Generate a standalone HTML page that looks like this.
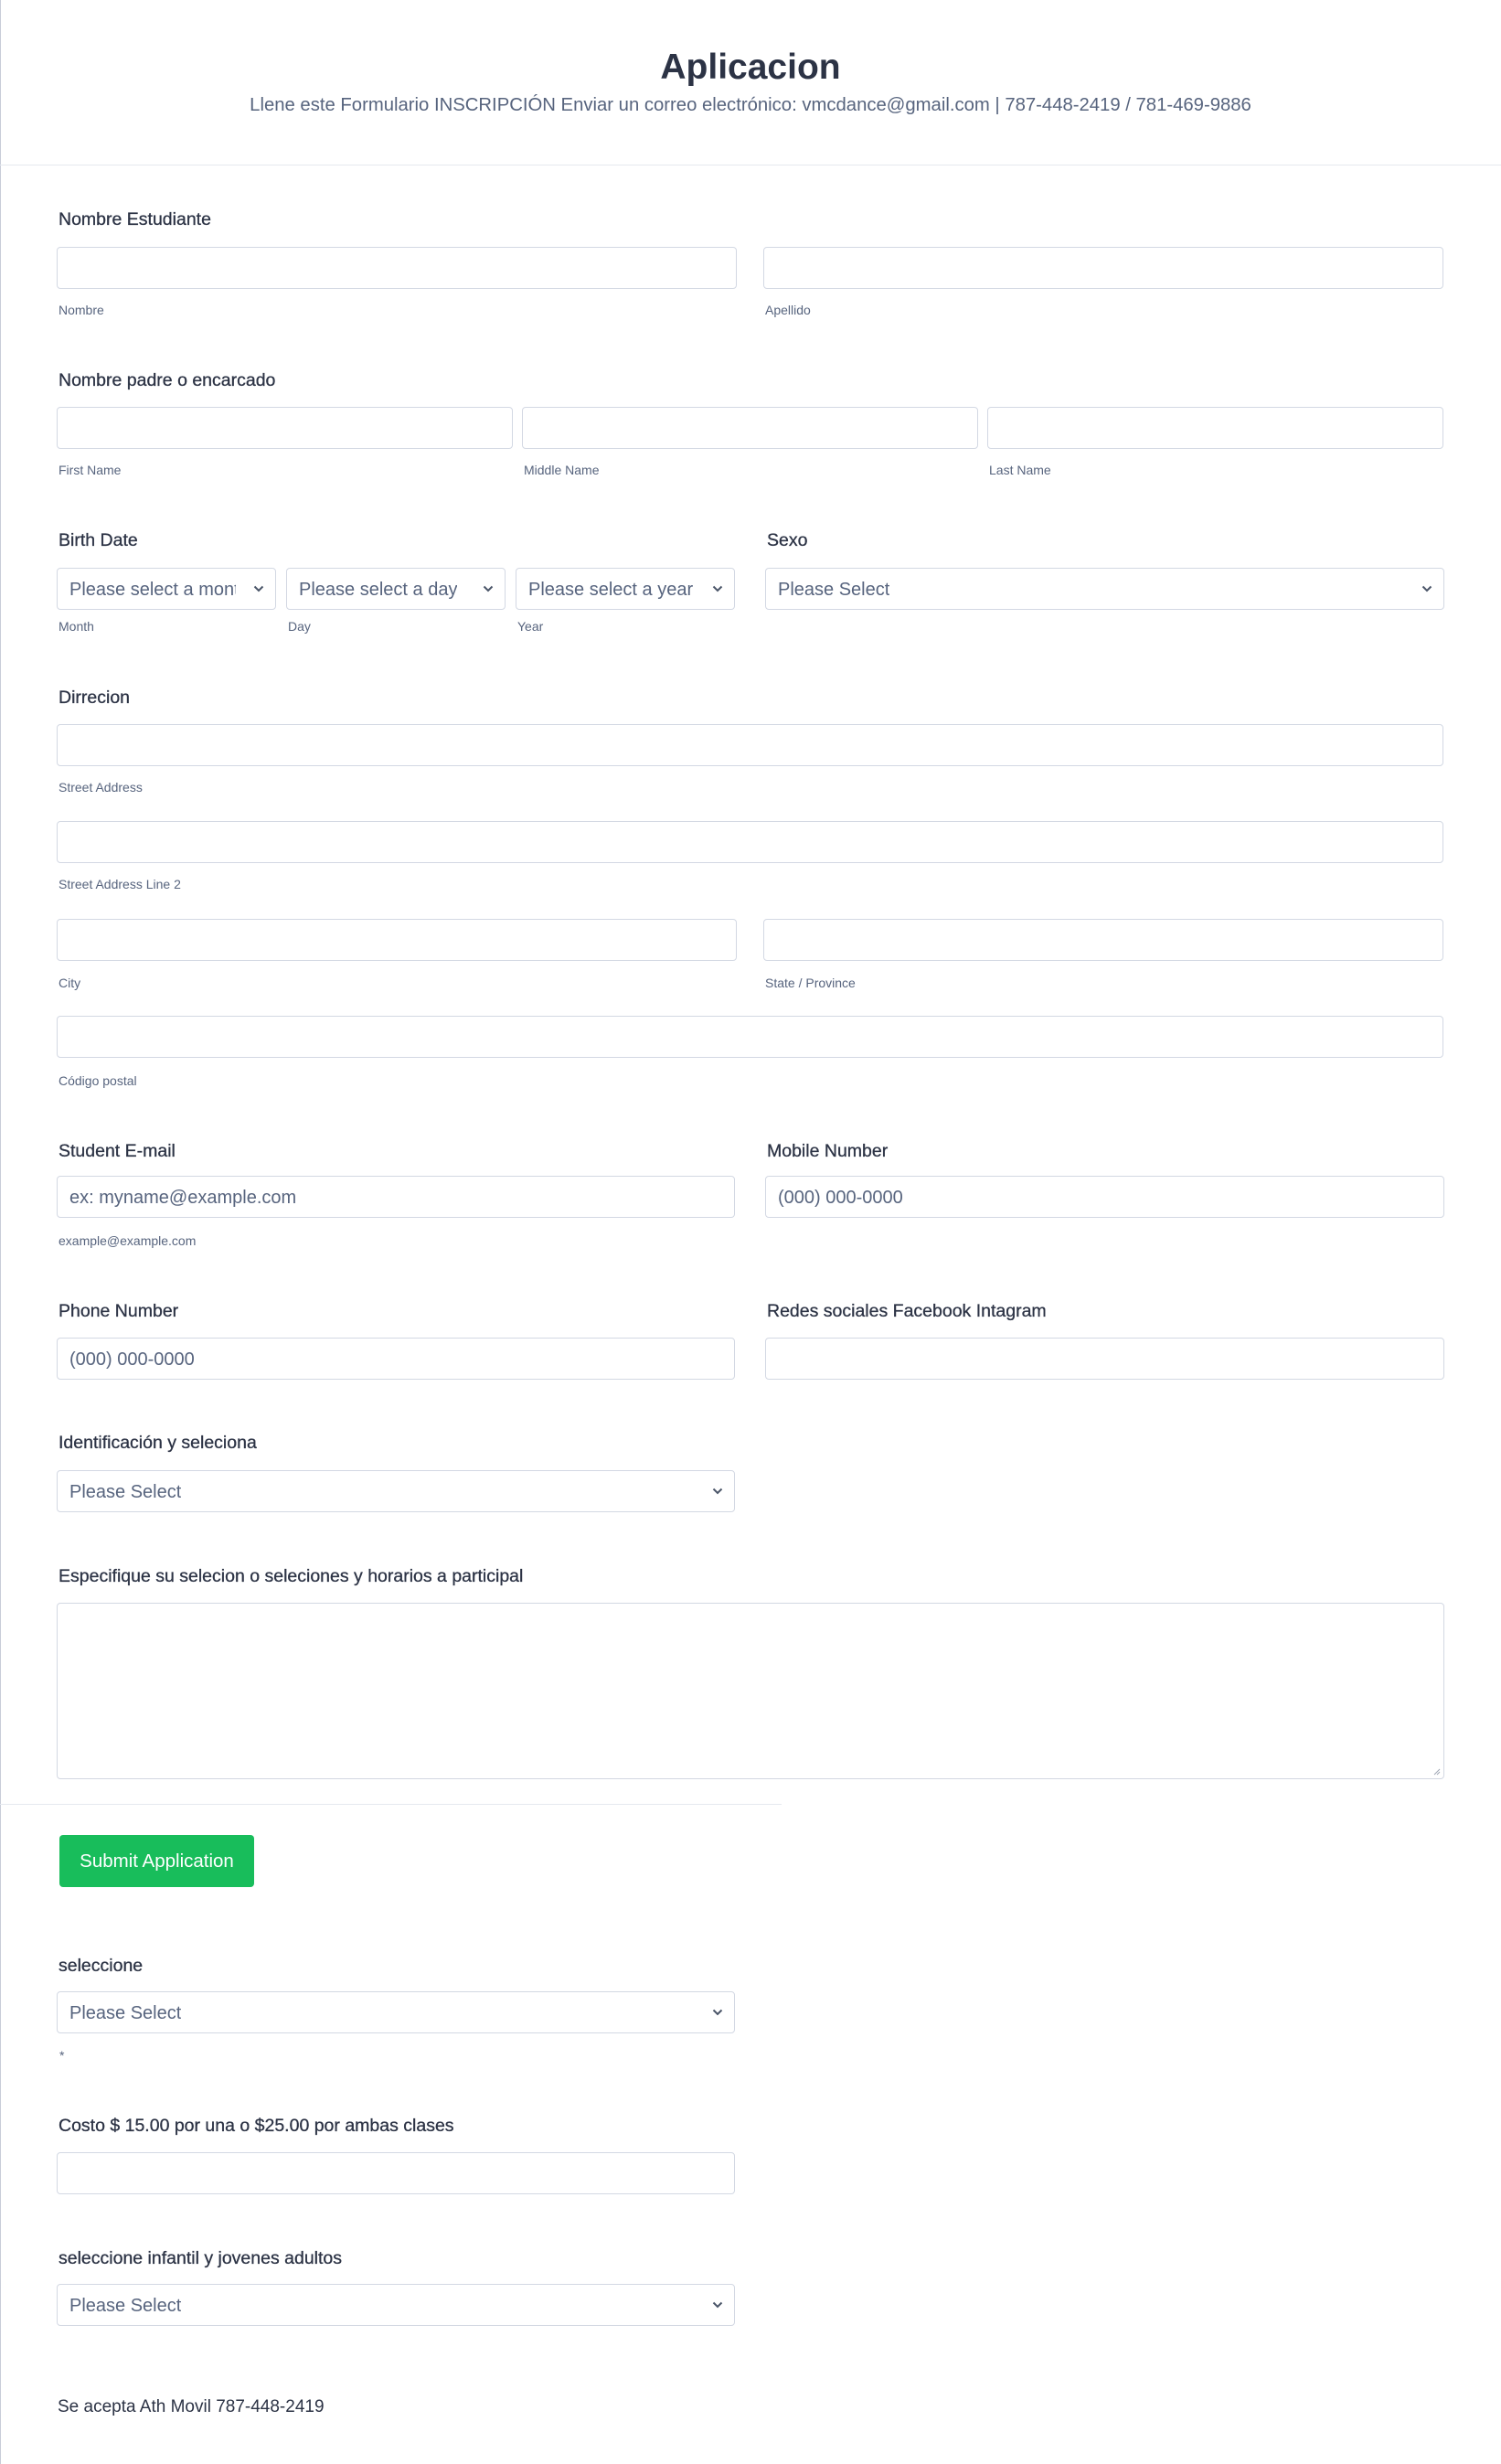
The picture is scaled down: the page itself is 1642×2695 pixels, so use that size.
<!DOCTYPE html>
<html><head><meta charset="utf-8"><style>
*{box-sizing:border-box;margin:0;padding:0}
html,body{width:1642px;height:2695px;background:#fff;overflow:hidden}
body{position:relative;font-family:"Liberation Sans",sans-serif;color:#2c3345}
.a{position:absolute;white-space:nowrap}
.lbl{position:absolute;font-size:19.5px;color:#2c3345;white-space:nowrap;line-height:22px;-webkit-text-stroke:0.3px #2c3345}
.sub{position:absolute;font-size:14px;color:#57647e;white-space:nowrap;line-height:16px}
.in{position:absolute;border:1px solid #d3d8e3;border-radius:4px;background:#fff;height:46px}
.in span{position:absolute;left:13px;top:12px;font-size:20px;color:#57647e;line-height:22px;white-space:nowrap;overflow:hidden}
.sel svg{position:absolute;right:12px;top:18px}
</style></head><body>
<div class="a" style="left:0;top:0;width:1px;height:2695px;background:#c8cdd8"></div>
<div class="a" style="left:0;top:0;width:1642px;text-align:center;top:50px;font-size:39px;font-weight:bold;color:#2c3345;line-height:48px">Aplicacion</div>
<div class="a" style="left:0;width:1642px;text-align:center;top:104px;font-size:20.3px;color:#57647e;line-height:22px">Llene este Formulario INSCRIPCIÓN Enviar un correo electrónico: vmcdance@gmail.com | 787-448-2419 / 781-469-9886</div>
<div class="a" style="left:0;top:180px;width:1642px;height:1px;background:#e6e9ef"></div>

<div class="lbl" style="left:64px;top:229px">Nombre Estudiante</div>
<div class="in" style="left:62px;top:270px;width:744px"></div>
<div class="in" style="left:835px;top:270px;width:744px"></div>
<div class="sub" style="left:64px;top:331px">Nombre</div>
<div class="sub" style="left:837px;top:331px">Apellido</div>

<div class="lbl" style="left:64px;top:405px">Nombre padre o encarcado</div>
<div class="in" style="left:62px;top:445px;width:499px"></div>
<div class="in" style="left:571px;top:445px;width:499px"></div>
<div class="in" style="left:1080px;top:445px;width:499px"></div>
<div class="sub" style="left:64px;top:506px">First Name</div>
<div class="sub" style="left:573px;top:506px">Middle Name</div>
<div class="sub" style="left:1082px;top:506px">Last Name</div>

<div class="lbl" style="left:64px;top:580px">Birth Date</div>
<div class="lbl" style="left:839px;top:580px">Sexo</div>
<div class="in sel" style="left:62px;top:621px;width:240px"><span style="width:182px">Please select a month</span><svg width="12" height="8" viewBox="0 0 12 8"><path d="M1.5 1.5L6 6l4.5-4.5" fill="none" stroke="#4a5568" stroke-width="2"/></svg></div>
<div class="in sel" style="left:313px;top:621px;width:240px"><span>Please select a day</span><svg width="12" height="8" viewBox="0 0 12 8"><path d="M1.5 1.5L6 6l4.5-4.5" fill="none" stroke="#4a5568" stroke-width="2"/></svg></div>
<div class="in sel" style="left:564px;top:621px;width:240px"><span>Please select a year</span><svg width="12" height="8" viewBox="0 0 12 8"><path d="M1.5 1.5L6 6l4.5-4.5" fill="none" stroke="#4a5568" stroke-width="2"/></svg></div>
<div class="in sel" style="left:837px;top:621px;width:743px"><span>Please Select</span><svg width="12" height="8" viewBox="0 0 12 8"><path d="M1.5 1.5L6 6l4.5-4.5" fill="none" stroke="#4a5568" stroke-width="2"/></svg></div>
<div class="sub" style="left:64px;top:677px">Month</div>
<div class="sub" style="left:315px;top:677px">Day</div>
<div class="sub" style="left:566px;top:677px">Year</div>

<div class="lbl" style="left:64px;top:752px">Dirrecion</div>
<div class="in" style="left:62px;top:792px;width:1517px"></div>
<div class="sub" style="left:64px;top:853px">Street Address</div>
<div class="in" style="left:62px;top:898px;width:1517px"></div>
<div class="sub" style="left:64px;top:959px">Street Address Line 2</div>
<div class="in" style="left:62px;top:1005px;width:744px"></div>
<div class="in" style="left:835px;top:1005px;width:744px"></div>
<div class="sub" style="left:64px;top:1067px">City</div>
<div class="sub" style="left:837px;top:1067px">State / Province</div>
<div class="in" style="left:62px;top:1111px;width:1517px"></div>
<div class="sub" style="left:64px;top:1174px">Código postal</div>

<div class="lbl" style="left:64px;top:1248px">Student E-mail</div>
<div class="lbl" style="left:839px;top:1248px">Mobile Number</div>
<div class="in" style="left:62px;top:1286px;width:742px"><span>ex: myname@example.com</span></div>
<div class="in" style="left:837px;top:1286px;width:743px"><span>(000) 000-0000</span></div>
<div class="sub" style="left:64px;top:1349px">example@example.com</div>

<div class="lbl" style="left:64px;top:1423px">Phone Number</div>
<div class="lbl" style="left:839px;top:1423px">Redes sociales Facebook Intagram</div>
<div class="in" style="left:62px;top:1463px;width:742px"><span>(000) 000-0000</span></div>
<div class="in" style="left:837px;top:1463px;width:743px"></div>

<div class="lbl" style="left:64px;top:1567px">Identificación y seleciona</div>
<div class="in sel" style="left:62px;top:1608px;width:742px"><span>Please Select</span><svg width="12" height="8" viewBox="0 0 12 8"><path d="M1.5 1.5L6 6l4.5-4.5" fill="none" stroke="#4a5568" stroke-width="2"/></svg></div>

<div class="lbl" style="left:64px;top:1713px">Especifique su selecion o seleciones y horarios a participal</div>
<div class="in" style="left:62px;top:1753px;width:1518px;height:193px"><svg style="position:absolute;right:3px;bottom:3px" width="8" height="8" viewBox="0 0 8 8"><path d="M1 7L7 1M4 7L7 4" stroke="#a0a7b5" stroke-width="1"/></svg></div>

<div class="a" style="left:0;top:1973px;width:855px;height:1px;background:#e6e9ef"></div>
<div class="a" style="left:65px;top:2007px;width:213px;height:57px;background:#18bd5b;border-radius:4px;color:#fff;font-size:20.5px;line-height:57px;text-align:center">Submit Application</div>

<div class="lbl" style="left:64px;top:2139px">seleccione</div>
<div class="in sel" style="left:62px;top:2178px;width:742px"><span>Please Select</span><svg width="12" height="8" viewBox="0 0 12 8"><path d="M1.5 1.5L6 6l4.5-4.5" fill="none" stroke="#4a5568" stroke-width="2"/></svg></div>
<div class="sub" style="left:65px;top:2240px">*</div>

<div class="lbl" style="left:64px;top:2314px">Costo $ 15.00 por una o $25.00 por ambas clases</div>
<div class="in" style="left:62px;top:2354px;width:742px"></div>

<div class="lbl" style="left:64px;top:2459px">seleccione infantil y jovenes adultos</div>
<div class="in sel" style="left:62px;top:2498px;width:742px"><span>Please Select</span><svg width="12" height="8" viewBox="0 0 12 8"><path d="M1.5 1.5L6 6l4.5-4.5" fill="none" stroke="#4a5568" stroke-width="2"/></svg></div>

<div class="a" style="left:63px;top:2622px;font-size:19px;line-height:22px;color:#2c3345">Se acepta Ath Movil 787-448-2419</div>
</body></html>
